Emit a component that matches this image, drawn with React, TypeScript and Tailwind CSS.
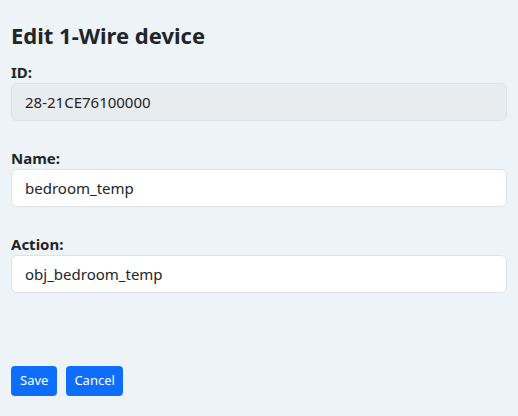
export default function App() {
  const fields = [
    { label: "ID:", value: "28-21CE76100000", disabled: true },
    { label: "Name:", value: "bedroom_temp", disabled: false },
    { label: "Action:", value: "obj_bedroom_temp", disabled: false },
  ];

  return (
    <div
      className="min-h-[416px] bg-[#edf3f7] px-[11px] pt-[19px] text-[#212529]"
      style={{ fontFamily: '"Noto Sans", "Open Sans", sans-serif' }}
    >
      <h3 className="text-[22px] font-bold leading-[32px] mb-[10px]">Edit 1-Wire device</h3>

      <div className="flex flex-col">
        {fields.map((f, i) => (
          <div key={f.label} className={i > 0 ? "mt-[26px]" : ""}>
            <label className="block text-[15px] font-bold leading-[22px]">{f.label}</label>
            <input
              readOnly
              value={f.value}
              className={`w-full h-[38px] px-[13px] rounded-[6px] border border-[#dee2e6] text-[15px] outline-none ${
                f.disabled ? "bg-[#e9ecef]" : "bg-white"
              }`}
            />
          </div>
        ))}
      </div>

      <div className="flex gap-[9px] mt-[73px]">
        <button className="h-[30px] px-[9px] rounded-[4px] bg-[#0d6efd] text-white text-[13px]">Save</button>
        <button className="h-[30px] px-[8px] rounded-[4px] bg-[#0d6efd] text-white text-[13px]">Cancel</button>
      </div>
    </div>
  );
}
